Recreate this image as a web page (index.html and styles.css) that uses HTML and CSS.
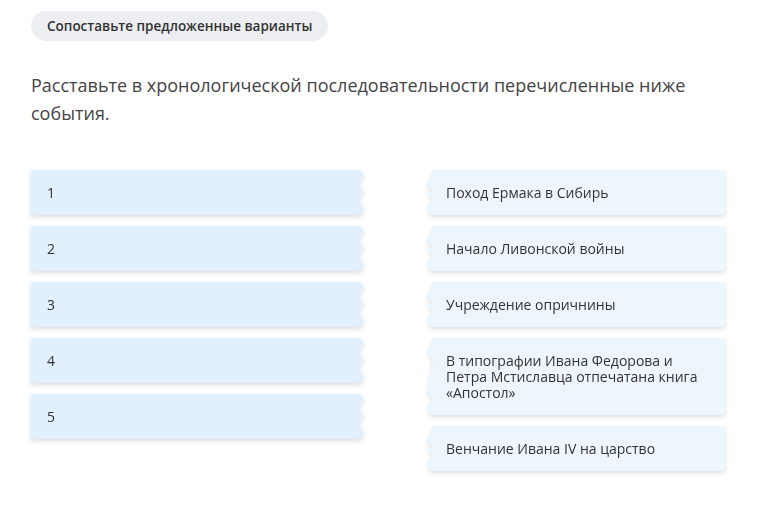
FILE: index.html
```html
<!DOCTYPE html>
<html lang="ru">
<head>
<meta charset="utf-8">
<title>Сопоставьте предложенные варианты</title>
<link rel="stylesheet" href="styles.css">
</head>
<body>
<main class="task">
  <div class="task-badge">Сопоставьте предложенные варианты</div>
  <p class="task-question">Расставьте в хронологической последовательности перечисленные ниже события.</p>
  <div class="match">
    <div class="match-col slots">
      <div class="slot"><div class="slot-body">1</div></div>
      <div class="slot"><div class="slot-body">2</div></div>
      <div class="slot"><div class="slot-body">3</div></div>
      <div class="slot"><div class="slot-body">4</div></div>
      <div class="slot"><div class="slot-body">5</div></div>
    </div>
    <div class="match-col options">
      <div class="option"><div class="option-body">Поход Ермака в Сибирь</div></div>
      <div class="option"><div class="option-body">Начало Ливонской войны</div></div>
      <div class="option"><div class="option-body">Учреждение опричнины</div></div>
      <div class="option"><div class="option-body">В типографии Ивана Федорова и Петра Мстиславца отпечатана книга «Апостол»</div></div>
      <div class="option"><div class="option-body">Венчание Ивана IV на царство</div></div>
    </div>
  </div>
</main>
</body>
</html>
```

FILE: styles.css
```css
html, body {
  margin: 0;
  padding: 0;
  background: #ffffff;
}

body {
  font-family: "Open Sans", "Noto Sans", sans-serif;
  color: #333333;
}

.task {
  padding: 11px 31px 40px 31px;
}

.task-badge {
  display: inline-block;
  height: 30px;
  line-height: 30px;
  padding: 0 16px;
  border-radius: 15px;
  background: #eceef1;
  font-size: 13.5px;
  font-weight: 600;
  color: #333333;
}

.task-question {
  margin: 30px 0 0 0;
  font-size: 18px;
  line-height: 28px;
  color: #444444;
  max-width: 690px;
}

.match {
  display: flex;
  gap: 63px;
  margin-top: 43px;
}

.match-col {
  display: flex;
  flex-direction: column;
  gap: 11px;
}

.slots {
  width: 333px;
}

.options {
  width: 298px;
}

/* shadow sits on the wrapper so the clipped edge keeps it */
.slot,
.option {
  filter: drop-shadow(0 2px 2px rgba(0, 0, 0, 0.13));
}

.slot-body,
.option-body {
  font-size: 14px;
  line-height: 16px;
  color: #333333;
}

/* empty answer slot: toothed right edge */
.slot-body {
  background: #e2effc;
  height: 45px;
  box-sizing: border-box;
  padding: 15px 16px 14px 16px;
  clip-path: polygon(
    0 0,
    calc(100% - 4px) 0,
    100% 6px,
    calc(100% - 6px) 14px,
    100% 22px,
    calc(100% - 6px) 30px,
    100% 38px,
    calc(100% - 4px) 45px,
    0 45px
  );
}

/* draggable event card: toothed left edge */
.option-body {
  background: #eef6fd;
  min-height: 45px;
  box-sizing: border-box;
  padding: 15px 24px 14px 19px;
  clip-path: polygon(
    4px 0,
    100% 0,
    100% 100%,
    4px 100%,
    0 calc(100% - 7px),
    6px calc(100% - 15px),
    0 calc(100% - 23px),
    6px 22px,
    0 14px,
    6px 6px
  );
}
```
